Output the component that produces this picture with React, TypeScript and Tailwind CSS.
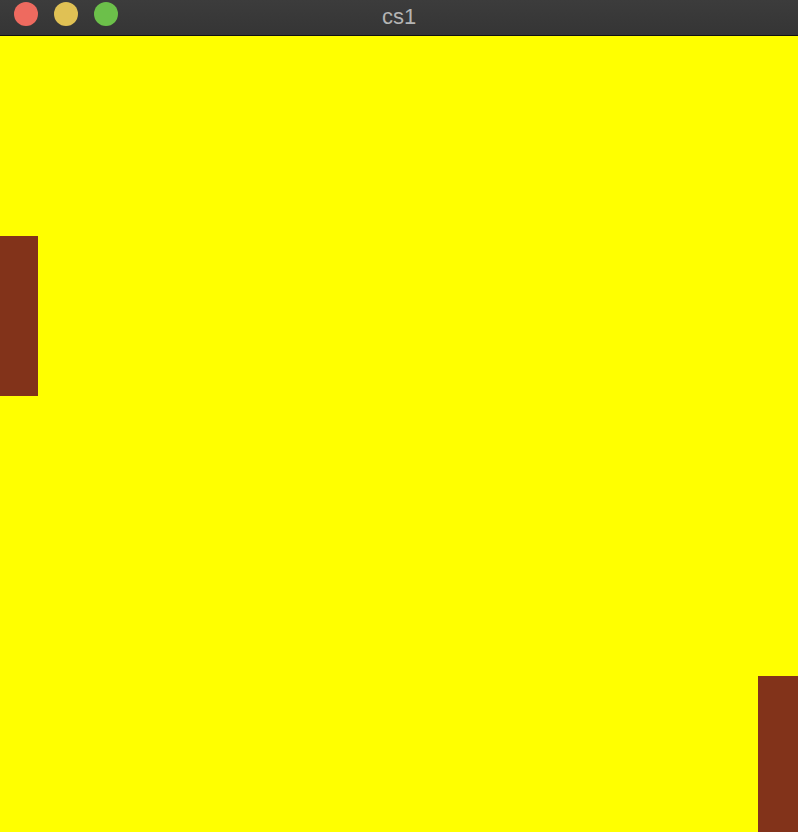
export default function App() {
  return (
    <div className="w-[798px] h-[832px] flex flex-col overflow-hidden bg-[#ffff00]" style={{ fontFamily: '"Liberation Sans", Arial, sans-serif' }}>
      {/* Title bar */}
      <div className="relative h-[36px] shrink-0 flex items-center bg-gradient-to-b from-[#3c3c3c] to-[#353535] border-b border-[#111111]">
        <div className="flex items-center gap-[16px] pl-[14px] -mt-[8px]">
          <span className="w-[24px] h-[24px] rounded-full bg-[#ee6a5f]" />
          <span className="w-[24px] h-[24px] rounded-full bg-[#e0c154]" />
          <span className="w-[24px] h-[24px] rounded-full bg-[#6cc04a]" />
        </div>
        <div className="absolute inset-x-0 top-0 h-[33px] flex items-center justify-center text-[22px] text-[#b4b4b4]">
          cs1
        </div>
      </div>

      {/* Game canvas */}
      <div className="relative flex-1 bg-[#ffff00]">
        <div className="absolute left-0 top-[200px] w-[38px] h-[160px] bg-[#82331a]" />
        <div className="absolute left-[758px] top-[640px] w-[40px] h-[160px] bg-[#82331a]" />
      </div>
    </div>
  );
}
